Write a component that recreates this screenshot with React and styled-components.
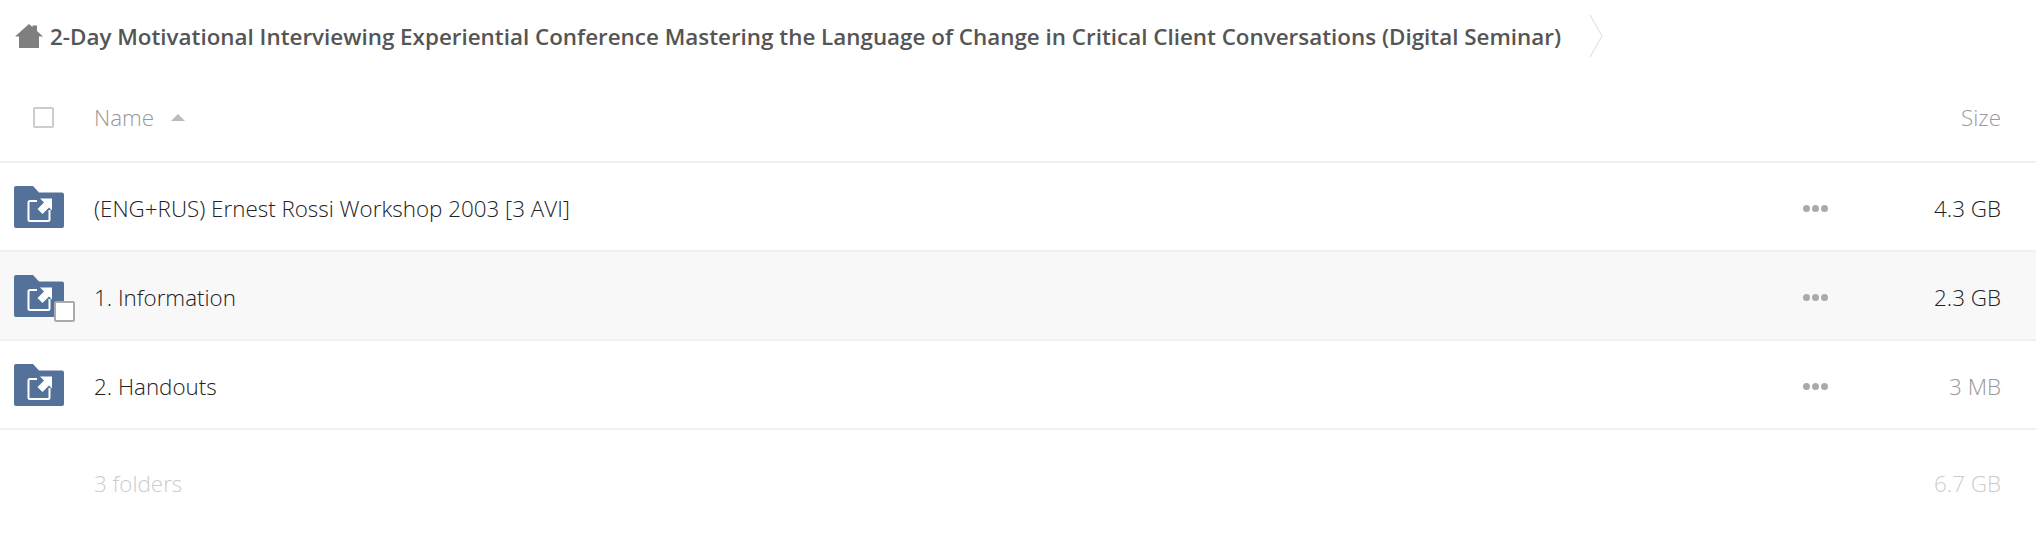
import styled, { createGlobalStyle } from "styled-components"

const GlobalStyle = createGlobalStyle`
  html, body {
    margin: 0;
    background: #fff;
    font-family: "Open Sans", "Liberation Sans", sans-serif;
  }
`
const Page = styled.div`
  width: 2036px;
  height: 550px;
  overflow: hidden;
`
const Breadcrumb = styled.div`
  display: flex;
  align-items: center;
  height: 72px;
  padding-left: 14px;
`
const Crumb = styled.span`
  margin-left: 6px;
  font-size: 22.4px;
  font-weight: 600;
  color: #555;
  white-space: nowrap;
`
const Chevron = styled.svg`
  margin-left: 28px;
  flex: none;
`
const HeaderRow = styled.div`
  display: flex;
  align-items: center;
  height: 91px;
  padding: 2px 35px 0 33px;
  border-bottom: 2px solid #f0f0f0;
  box-sizing: border-box;
  font-size: 22.4px;
  font-weight: 300;
  color: #999;
`
const Box = styled.span`
  display: block;
  flex: none;
  width: 21px;
  height: 21px;
  box-sizing: border-box;
  border: 2px solid ${(p) => (p.$hover ? "#aaa" : "#ccc")};
  border-radius: 2px;
  background: #fff;
`
const HeaderName = styled.span`
  margin-left: 40px;
`
const SortArrow = styled.span`
  margin-left: 17px;
  width: 0;
  height: 0;
  border-left: 7px solid transparent;
  border-right: 7px solid transparent;
  border-bottom: 7px solid #bbb;
`
const Spacer = styled.span`
  flex: 1;
`
const Row = styled.div`
  display: flex;
  align-items: center;
  height: 89px;
  padding: 0 35px 0 14px;
  border-bottom: 2px solid #f0f0f0;
  box-sizing: border-box;
  background: ${(p) => (p.$active ? "#f8f8f8" : "#fff")};
  font-size: 22.4px;
  font-weight: 300;
  color: #222;
`
const IconWrap = styled.span`
  position: relative;
  display: block;
  flex: none;
  width: 50px;
  height: 42px;
`
const HoverBox = styled(Box)`
  position: absolute;
  left: 40px;
  top: 26px;
`
const RowName = styled.span`
  margin-left: 30px;
  padding-top: 3px;
`
const Dots = styled.span`
  display: flex;
  gap: 2px;
  margin-top: 3px;
`
const Dot = styled.span`
  width: 7px;
  height: 7px;
  border-radius: 50%;
  background: #aaa;
`
const SizeCell = styled.span`
  width: 173px;
  padding-top: 3px;
  text-align: right;
  color: ${(p) => (p.$muted ? "#999" : "#222")};
`
const Footer = styled.div`
  display: flex;
  justify-content: space-between;
  align-items: center;
  height: 105px;
  padding: 2px 35px 0 94px;
  box-sizing: border-box;
  font-size: 22.4px;
  font-weight: 300;
  color: #ccc;
`

const HomeIcon = () => (
  <svg width="30" height="26" viewBox="0 0 30 26" style={{ flex: "none" }}>
    <path d="M1 13.500 15 1l3.500 3V2.500h4.500v5.500l6 5.500h-4V25H5V13.500z" fill="#7f7f7f" />
  </svg>
)

const FolderIcon = () => (
  <svg width="50" height="42" viewBox="0 0 50 42" style={{ display: "block" }}>
    <path
      d="M0 2a2 2 0 0 1 2-2h17l6 6.500H48a2 2 0 0 1 2 2V40a2 2 0 0 1-2 2H2a2 2 0 0 1-2-2z"
      fill="#547299"
    />
    <path
      d="M23 15H16a1.500 1.500 0 0 0-1.500 1.500v17a1.500 1.500 0 0 0 1.500 1.500h18a1.500 1.500 0 0 0 1.500-1.500V24"
      fill="none"
      stroke="#fff"
      strokeWidth="2"
    />
    <path d="M38 12.500H26l4 4-6.500 6.500 5 5 6.500-6.500 3 3z" fill="#fff" />
  </svg>
)

const rows = [
  { name: "(ENG+RUS) Ernest Rossi Workshop 2003 [3 AVI]", size: "4.3 GB" },
  { name: "1. Information", size: "2.3 GB", active: true },
  { name: "2. Handouts", size: "3 MB", muted: true },
]

const App = () => {
  return (
    <Page>
      <GlobalStyle />
      <Breadcrumb>
        <HomeIcon />
        <Crumb>
          2-Day Motivational Interviewing Experiential Conference Mastering the Language of Change in Critical Client Conversations (Digital Seminar)
        </Crumb>
        <Chevron width="14" height="44" viewBox="0 0 14 44">
          <path d="M1 1 13 22 1 43" fill="none" stroke="#ddd" />
        </Chevron>
      </Breadcrumb>
      <HeaderRow>
        <Box />
        <HeaderName>Name</HeaderName>
        <SortArrow />
        <Spacer />
        <span>Size</span>
      </HeaderRow>
      {rows.map((row) => (
        <Row key={row.name} $active={row.active}>
          <IconWrap>
            <FolderIcon />
            {row.active && <HoverBox $hover />}
          </IconWrap>
          <RowName>{row.name}</RowName>
          <Spacer />
          <Dots>
            <Dot />
            <Dot />
            <Dot />
          </Dots>
          <SizeCell $muted={row.muted}>{row.size}</SizeCell>
        </Row>
      ))}
      <Footer>
        <span>3 folders</span>
        <span>6.7 GB</span>
      </Footer>
    </Page>
  )
}

export default App
